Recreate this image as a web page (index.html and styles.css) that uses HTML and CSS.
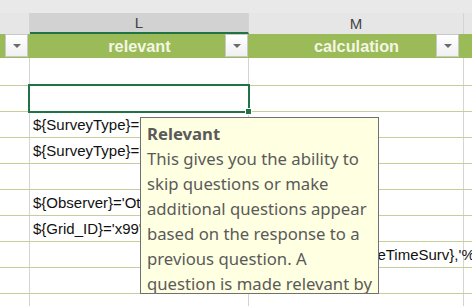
FILE: index.html
```html
<!DOCTYPE html>
<html>
<head>
<meta charset="utf-8">
<link rel="stylesheet" href="styles.css">
</head>
<body>
<div class="sheet">
  <div class="band"></div>
  <div class="row colhdr">
    <div class="c k"></div>
    <div class="c l hsel">L</div>
    <div class="c m">M</div>
    <div class="c x"></div>
  </div>
  <div class="row thdr">
    <div class="c k"><span class="fbtn"></span></div>
    <div class="c l"><span class="ttl">relevant</span><span class="fbtn"></span></div>
    <div class="c m"><span class="ttl">calculation</span><span class="fbtn"></span></div>
    <div class="c x"></div>
  </div>
  <div class="row data first"><div class="c k"></div><div class="c l"></div><div class="c m"></div><div class="c x"></div></div>
  <div class="row data"><div class="c k"></div><div class="c l"></div><div class="c m"></div><div class="c x"></div></div>
  <div class="row data"><div class="c k"></div><div class="c l">${SurveyType}='1'</div><div class="c m"></div><div class="c x"></div></div>
  <div class="row data"><div class="c k"></div><div class="c l">${SurveyType}='2'</div><div class="c m"></div><div class="c x"></div></div>
  <div class="row data"><div class="c k"></div><div class="c l"></div><div class="c m"></div><div class="c x"></div></div>
  <div class="row data"><div class="c k"></div><div class="c l">${Observer}='Other'</div><div class="c m"></div><div class="c x"></div></div>
  <div class="row data"><div class="c k"></div><div class="c l">${Grid_ID}='x99'</div><div class="c m"></div><div class="c x"></div></div>
  <div class="row data"><div class="c k"></div><div class="c l"></div><div class="c m calc">format-date(${DateTimeSurv},'%</div><div class="c x"></div></div>
  <div class="row data"><div class="c k"></div><div class="c l"></div><div class="c m"></div><div class="c x"></div></div>
  <div class="row data"><div class="c k"></div><div class="c l"></div><div class="c m"></div><div class="c x"></div></div>

  <div class="selbox"><span class="handle"></span></div>

  <div class="tip">
    <div class="tip-title">Relevant</div>
    <div class="tip-body">This gives you the ability to skip questions or make additional questions appear based on the response to a previous question. A question is made relevant by</div>
  </div>
</div>
</body>
</html>
```

FILE: styles.css
```css
* { box-sizing: border-box; }
html, body { margin: 0; padding: 0; }
body {
  width: 472px;
  height: 306px;
  overflow: hidden;
  background: #ffffff;
  font-family: "Liberation Sans", Arial, sans-serif;
}
.sheet {
  position: relative;
  width: 472px;
  height: 306px;
  overflow: hidden;
}
.band {
  height: 13px;
  background: #e9e9e9;
}
.row {
  display: flex;
}
.c {
  flex: none;
  border-right: 1px solid #d4d4d4;
  white-space: nowrap;
}
.k { width: 30px; }
.l { width: 219px; }
.m { width: 215px; }
.x { flex: 1; border-right: none; }

.colhdr {
  height: 21px;
  background: #e6e6e6;
}
.colhdr .c {
  display: flex;
  align-items: center;
  justify-content: center;
  font-size: 15px;
  color: #444444;
  padding-bottom: 1px;
}
.colhdr .hsel {
  background: #d2d2d2;
  border-bottom: 2px solid #217346;
  padding-bottom: 0;
}

.thdr {
  height: 24px;
  background: #9bbb59;
}
.thdr .c {
  border-right: none;
  position: relative;
  display: flex;
  align-items: center;
  justify-content: center;
}
.ttl {
  font-weight: bold;
  font-size: 16.3px;
  color: #f4f6e4;
}
.fbtn {
  position: absolute;
  top: 0;
  right: 1px;
  width: 23px;
  height: 23px;
  background: linear-gradient(#ffffff, #f0f0f0);
  border: 1px solid #c8c8c8;
}
.k .fbtn { right: 2px; }
.m .fbtn { right: 5px; }
.fbtn::after {
  content: "";
  position: absolute;
  left: 7px;
  top: 9px;
  border-left: 4px solid transparent;
  border-right: 4px solid transparent;
  border-top: 4px solid #6a6a6a;
}

.data {
  height: 26px;
  border-bottom: 1px solid #c6cf99;
}
.data.first { height: 28px; }
.data .c {
  font-size: 15px;
  color: #111111;
  padding-left: 3px;
  line-height: 25px;
  overflow: visible;
}
.data .calc { padding-left: 10px; }

.selbox {
  position: absolute;
  left: 28px;
  top: 84px;
  width: 222px;
  height: 29px;
  border: 2px solid #217346;
}
.handle {
  position: absolute;
  right: -4px;
  bottom: -4px;
  width: 7px;
  height: 7px;
  background: #217346;
  border: 1px solid #ffffff;
}

.tip {
  position: absolute;
  left: 140px;
  top: 117px;
  width: 239px;
  height: 177px;
  background: #ffffe1;
  border: 1px solid #707070;
  padding: 4px 0 0 6px;
  overflow: hidden;
  font-family: "Noto Sans", "Open Sans", sans-serif;
  color: #5a5a5a;
}
.tip-title {
  font-weight: bold;
  font-size: 16.7px;
  line-height: 24px;
}
.tip-body {
  font-size: 16.7px;
  line-height: 25px;
}
```
